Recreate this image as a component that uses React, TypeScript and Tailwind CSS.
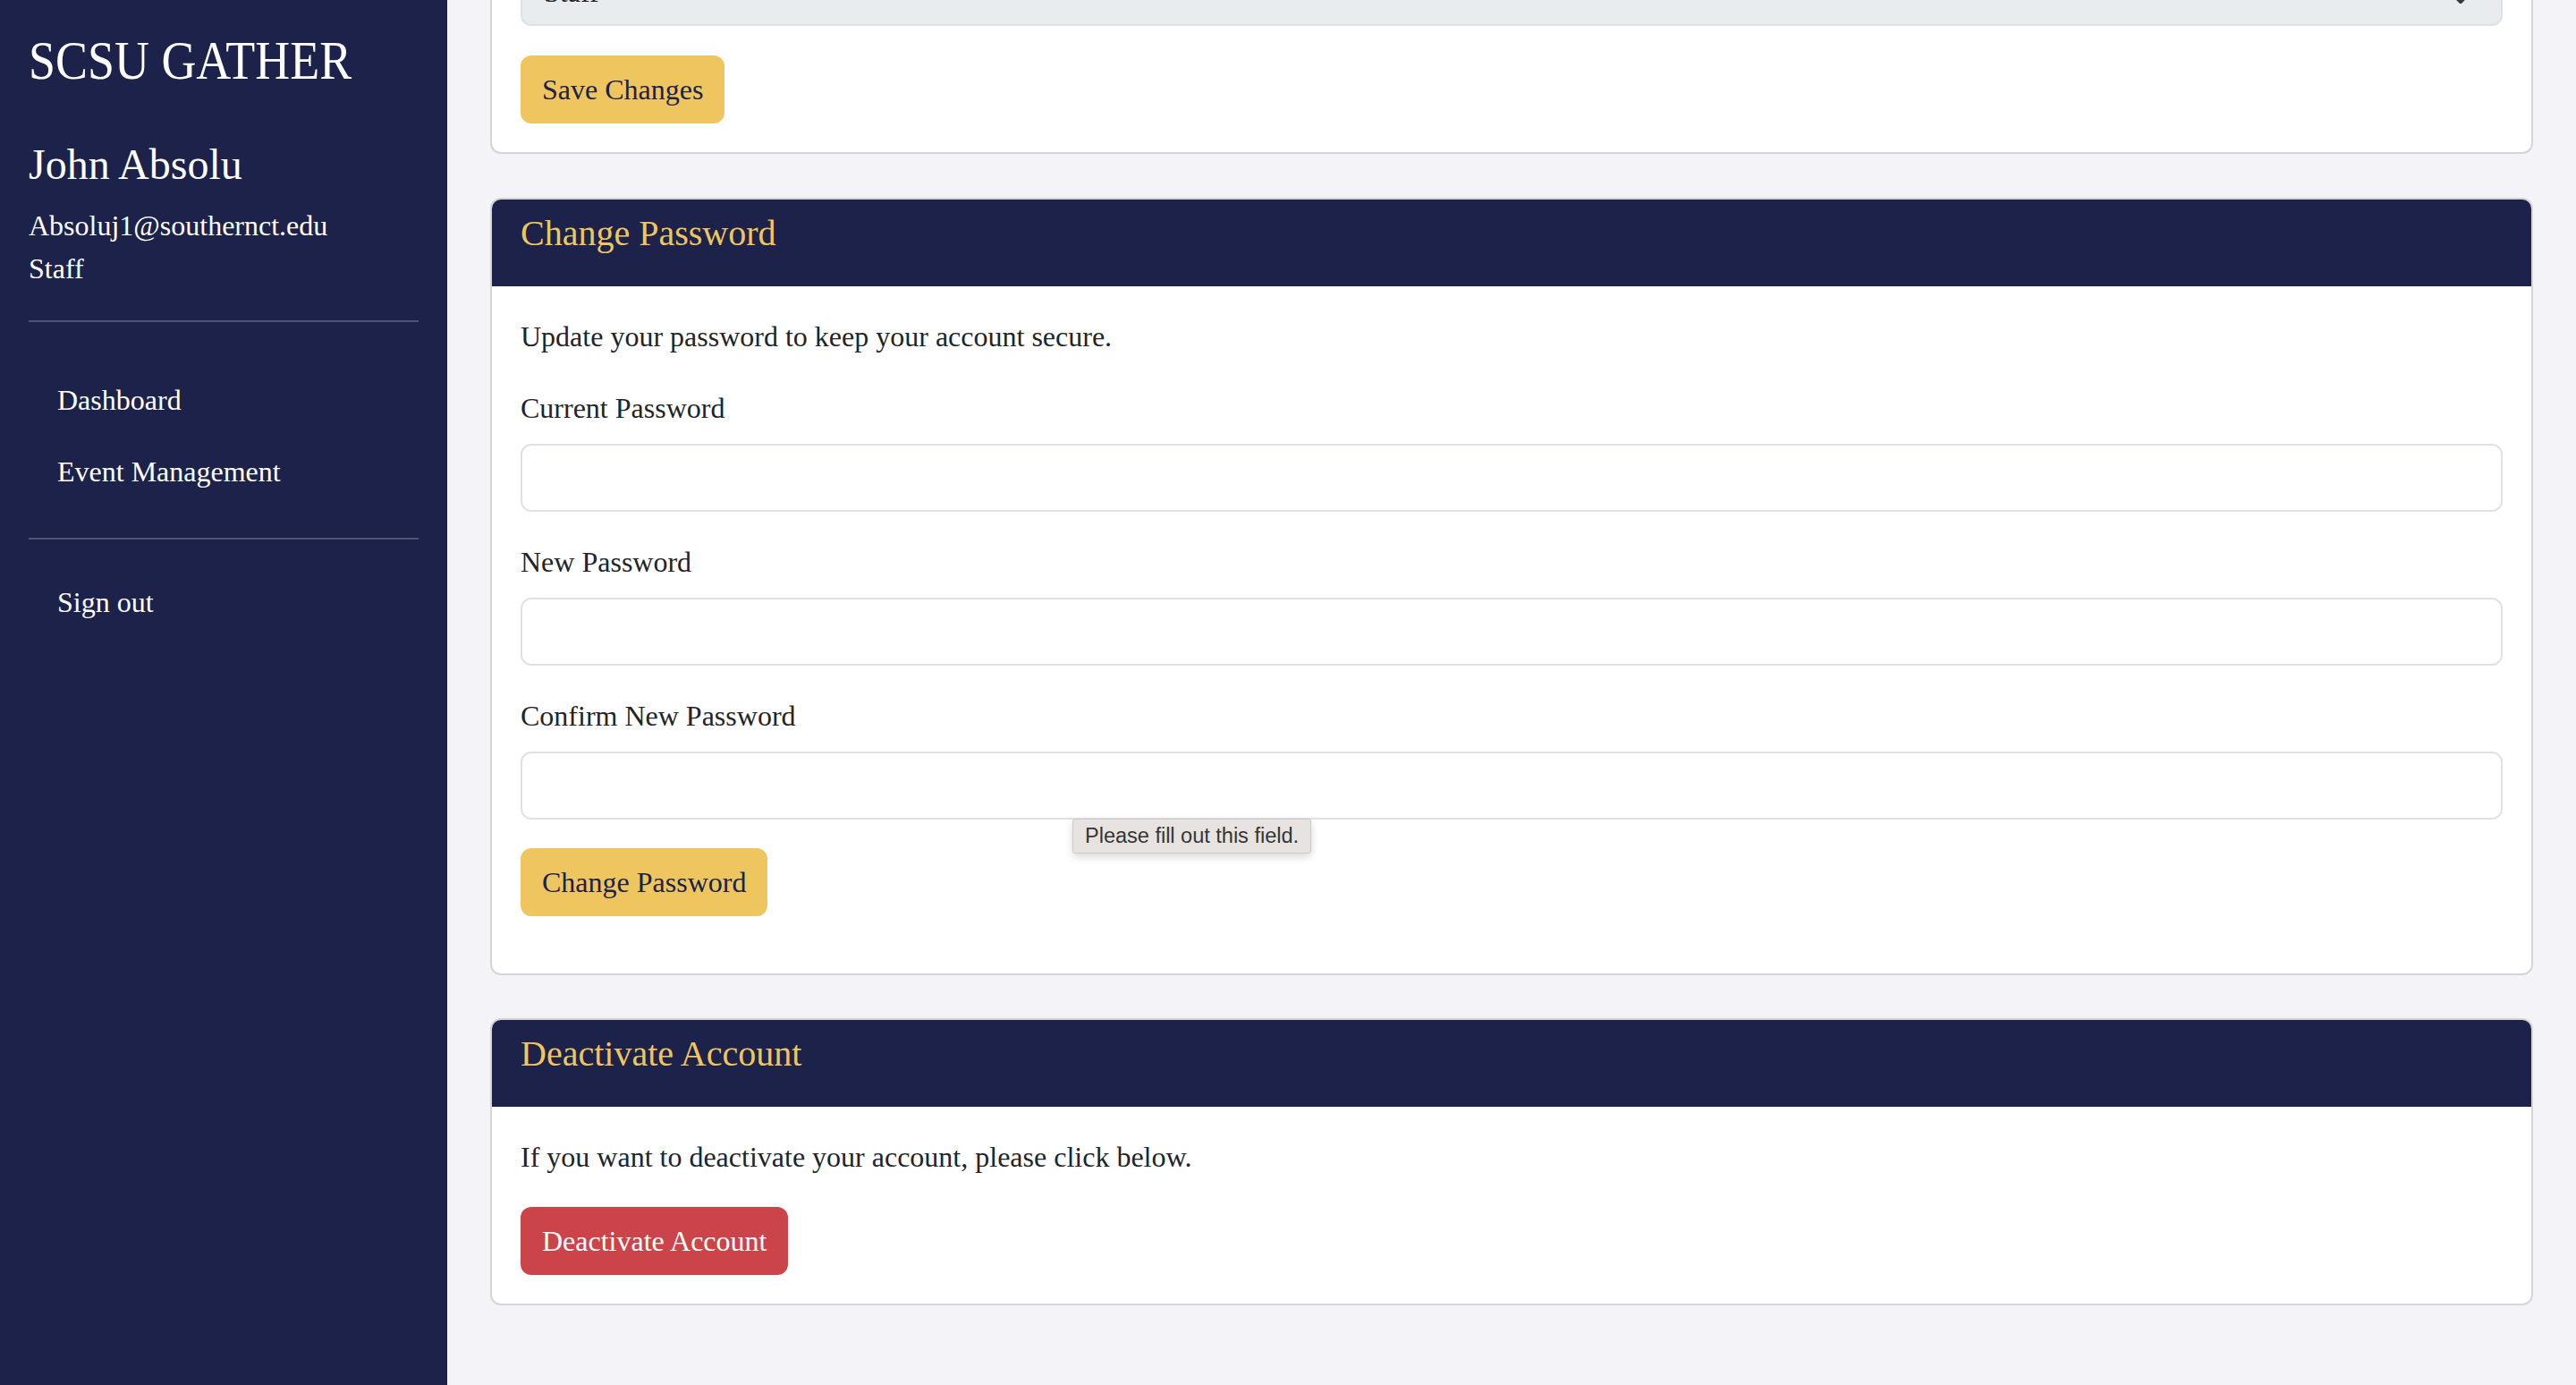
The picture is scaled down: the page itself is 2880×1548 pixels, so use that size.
import React from "react";

const Divider = ({ className = "" }: { className?: string }) => (
  <div className={`h-[2px] w-full bg-[#4f5575] ${className}`} />
);

const Field = ({ label, children }: { label: string; children?: React.ReactNode }) => (
  <div className="relative mb-[32px]">
    <label className="mb-[16px] block text-[32px] leading-[48px] text-[#212529]">{label}</label>
    <input
      type="password"
      className="block h-[76px] w-full rounded-[12px] border-2 border-[#dee2e6] bg-white px-[24px] text-[32px] outline-none"
    />
    {children}
  </div>
);

export default function App() {
  return (
    <div className="flex h-[1548px] w-full overflow-hidden font-['Liberation_Serif',serif]">
      <aside className="h-[1548px] w-[500px] shrink-0 bg-[#1c2249] px-[32px] pt-[29px] text-white">
        <h1 className="origin-left scale-x-[0.87] whitespace-nowrap text-[62px] leading-[77px]">SCSU GATHER</h1>
        <h2 className="mt-[49px] text-[48px] leading-[58px]">John Absolu</h2>
        <div className="mt-[15px] text-[32px] leading-[48px]">
          <p>Absoluj1@southernct.edu</p>
          <p>Staff</p>
        </div>
        <Divider className="mt-[34px]" />
        <nav className="mt-[47px] flex flex-col">
          <a className="block px-[32px] py-[16px] text-[32px] leading-[48px]">Dashboard</a>
          <a className="block px-[32px] py-[16px] text-[32px] leading-[48px]">Event Management</a>
        </nav>
        <Divider className="mt-[34px]" />
        <div className="mt-[30px]">
          <a className="block px-[32px] py-[16px] text-[32px] leading-[48px]">Sign out</a>
        </div>
      </aside>

      <main className="h-[1548px] flex-1 overflow-hidden bg-[#f4f4f8] px-[48px]">
        {/* Profile card (scrolled, only bottom visible) */}
        <section className="flex flex-col rounded-b-[12px] border-x-2 border-b-2 border-[#d5d5d8] bg-white px-[32px] pb-[32px]">
          <div className="relative -mt-[47px] flex h-[76px] items-center rounded-[12px] border-2 border-[#dee2e6] bg-[#e9ecef] pl-[24px] text-[32px] leading-[48px] text-[#212529]">
            Staff
            <svg
              className="absolute right-[29px] top-[25px] h-[32px] w-[32px]"
              viewBox="0 0 16 16"
              fill="none"
              stroke="#343a40"
              strokeWidth="2"
              strokeLinecap="round"
              strokeLinejoin="round"
            >
              <path d="M2 5l6 6 6-6" />
            </svg>
          </div>
          <button className="mt-[33px] h-[76px] self-start rounded-[12px] bg-[#efc55f] px-[24px] text-[32px] leading-[48px] text-[#1c2249]">
            Save Changes
          </button>
        </section>

        {/* Change Password */}
        <section className="mt-[49px] overflow-hidden rounded-[12px] border-2 border-[#d5d5d8] bg-white">
          <div className="bg-[#1c2249] px-[32px] pb-[35px] pt-[14px]">
            <h3 className="text-[40px] leading-[48px] text-[#efc55f]">Change Password</h3>
          </div>
          <div className="p-[32px]">
            <p className="mb-[32px] text-[32px] leading-[48px] text-[#212529]">
              Update your password to keep your account secure.
            </p>
            <form className="mb-[32px]" onSubmit={(e) => e.preventDefault()}>
              <Field label="Current Password" />
              <Field label="New Password" />
              <Field label="Confirm New Password">
                <div className="absolute left-[617px] top-[139px] flex h-[39px] items-center rounded-[3px] border border-[#cfcac7] bg-[#e7e3e0] px-[13px] font-['Liberation_Sans',Arial,sans-serif] text-[23.5px] leading-[27px] text-[#353535] shadow-[0_4px_10px_rgba(0,0,0,0.15)]">
                  Please fill out this field.
                </div>
              </Field>
              <button
                type="submit"
                className="h-[76px] rounded-[12px] bg-[#efc55f] px-[24px] text-[32px] leading-[48px] text-[#1c2249]"
              >
                Change Password
              </button>
            </form>
          </div>
        </section>

        {/* Deactivate Account */}
        <section className="mt-[48px] overflow-hidden rounded-[12px] border-2 border-[#d5d5d8] bg-white">
          <div className="bg-[#1c2249] px-[32px] pb-[35px] pt-[14px]">
            <h3 className="text-[40px] leading-[48px] text-[#efc55f]">Deactivate Account</h3>
          </div>
          <div className="p-[32px]">
            <p className="mb-[32px] text-[32px] leading-[48px] text-[#212529]">
              If you want to deactivate your account, please click below.
            </p>
            <button className="h-[76px] rounded-[12px] bg-[#cb444a] px-[24px] text-[32px] leading-[48px] text-white">
              Deactivate Account
            </button>
          </div>
        </section>
      </main>
    </div>
  );
}
